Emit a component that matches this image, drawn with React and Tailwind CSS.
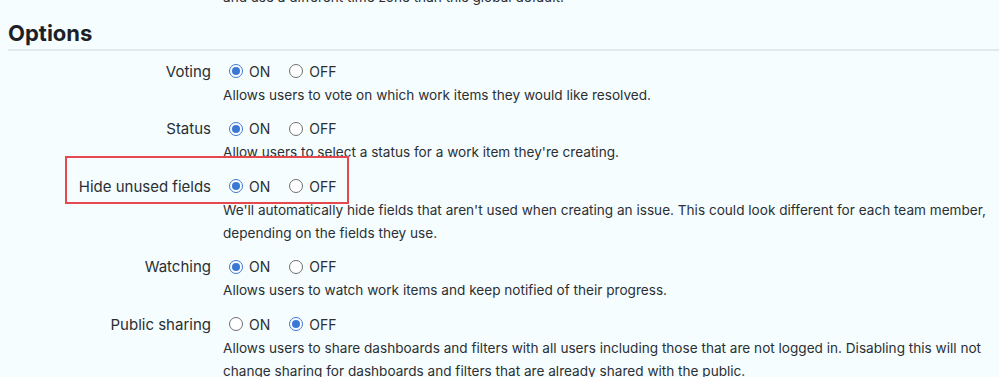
import React from 'react';

const options = [
  {
    label: 'Voting',
    on: true,
    desc: ['Allows users to vote on which work items they would like resolved.'],
  },
  {
    label: 'Status',
    on: true,
    desc: ["Allow users to select a status for a work item they're creating."],
  },
  {
    label: 'Hide unused fields',
    on: true,
    desc: [
      "We'll automatically hide fields that aren't used when creating an issue. This could look different for each team member,",
      'depending on the fields they use.',
    ],
  },
  {
    label: 'Watching',
    on: true,
    desc: ['Allows users to watch work items and keep notified of their progress.'],
  },
  {
    label: 'Public sharing',
    on: false,
    desc: [
      'Allows users to share dashboards and filters with all users including those that are not logged in. Disabling this will not',
      'change sharing for dashboards and filters that are already shared with the public.',
    ],
  },
];

function Radio({ checked }) {
  if (checked) {
    return (
      <span className="ml-[6px] flex h-[14px] w-[14px] items-center justify-center rounded-full border border-[#3a78d6] bg-white">
        <span className="h-[8px] w-[8px] rounded-full bg-[#3a78d6]" />
      </span>
    );
  }
  return <span className="ml-[6px] h-[14px] w-[14px] rounded-full border border-[#6f6f6f] bg-white" />;
}

function OptionRow({ label, on, desc }) {
  return (
    <div className="grid grid-cols-[211px_1fr] gap-x-3 mb-[10.5px]">
      <div className="text-right text-[15px] leading-[24px]">{label}</div>
      <div className="flex h-[23.5px] items-center text-[14px]">
        <Radio checked={on} />
        <span className="ml-[6px]">ON</span>
        <span className="ml-[13px] flex items-center">
          <Radio checked={!on} />
          <span className="ml-[6px]">OFF</span>
        </span>
      </div>
      <div />
      <div className="text-[13.6px] leading-[23px]">
        {desc.map((line) => (
          <div key={line} className="whitespace-nowrap">{line}</div>
        ))}
      </div>
    </div>
  );
}

export default function App() {
  return (
    <div
      className="relative h-[377px] w-[999px] overflow-hidden bg-[#f5fdff] text-[#2b2f33]"
      style={{ fontFamily: 'Inter, "Noto Sans", sans-serif' }}
    >
      <div className="-mt-[14px]">
        <div className="grid grid-cols-[211px_1fr] gap-x-3">
          <div />
          <div className="text-[13.6px] leading-[23px] whitespace-nowrap">and use a different time zone than this global default.</div>
        </div>
        <h2 className="ml-2 mt-[10px] border-b-2 border-[#e2eaee] pb-[2px] text-[22px] font-bold leading-[28px] text-[#1d2127]">
          Options
        </h2>
        <div className="mt-[8.5px]">
          {options.map((o) => (
            <OptionRow key={o.label} {...o} />
          ))}
        </div>
      </div>
      {/* highlight annotation */}
      <div className="pointer-events-none absolute left-[65px] top-[156px] h-[48px] w-[284px] border-2 border-[#e5484d]" />
    </div>
  );
}
